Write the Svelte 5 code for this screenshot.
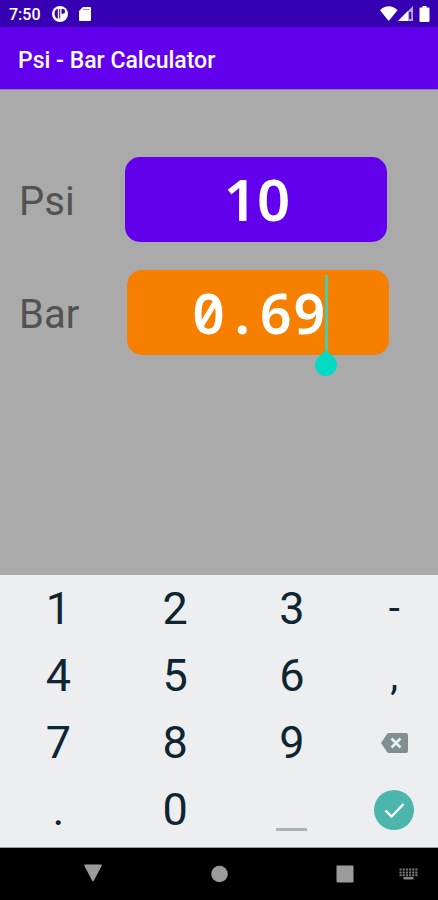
<script lang="ts">
  let psi = $state('10');
  let bar = $state('0.69');

  const keys = ['1', '2', '3', '-', '4', '5', '6', ',', '7', '8', '9', 'delete', '.', '0', 'space', 'done'];

  function update(value: string) {
    bar = value;
    const n = parseFloat(value);
    psi = isNaN(n) ? '' : String(Math.round(n * 14.5038));
  }

  function press(key: string) {
    if (key === 'done') return;
    if (key === 'delete') update(bar.slice(0, -1));
    else if (key === 'space') update(bar + ' ');
    else update(bar + key);
  }
</script>

<div class="screen">
  <div class="status-bar">
    <span class="time">7:50</span>
    <svg class="status-icon" viewBox="0 0 16 16" aria-hidden="true">
      <circle cx="8" cy="8" r="8" fill="#fff" />
      <path d="M5.800 2.500v10.500Q2.500 11 2.500 7.500T5.800 2.500zM7.200 3h1v9.500h-1zM9.500 3h1.200a2.400 2.400 0 0 1 0 4.800H9.500z" fill="#3700b3" />
    </svg>
    <svg class="sd-icon" viewBox="0 0 12 14" aria-hidden="true">
      <path d="M4 0h7a1 1 0 0 1 1 1v12a1 1 0 0 1-1 1H1a1 1 0 0 1-1-1V4z" fill="#fff" />
      <path d="M4.500 2.500h5.500" stroke="#3700b3" stroke-opacity="0.7" stroke-dasharray="1.400 .6" />
    </svg>
    <svg class="signal-icons" viewBox="0 0 50 16" aria-hidden="true">
      <path d="M0 4.200C5-1 12.500-1 17.500 4.200L8.700 15z" fill="#fff" />
      <path d="M33 0v15H18z" fill="#fff" fill-opacity="0.65" />
      <path d="M28 5v10H18z" fill="#fff" />
      <path d="M30.200 6v7" stroke="#3700b3" stroke-width="2" />
      <path d="M42.500 0h4v1.500h2q1 0 1 1V15q0 1-1 1h-8q-1 0-1-1V2.500q0-1 1-1h2z" fill="#fff" />
    </svg>
  </div>

  <header class="app-bar">
    <h1>Psi - Bar Calculator</h1>
  </header>

  <main>
    <div class="row psi">
      <label for="psi">Psi</label>
      <div class="field">
        <input id="psi" type="text" inputmode="none" bind:value={psi} />
      </div>
    </div>
    <div class="row bar">
      <label for="bar">Bar</label>
      <div class="field">
        <input id="bar" type="text" inputmode="none" bind:value={bar} />
        <span class="caret"></span>
        <svg class="handle" viewBox="0 0 22 26" aria-hidden="true">
          <path d="M11 0l7.800 7.200a11 11 0 1 1-15.600 0z" fill="#03dac5" />
        </svg>
      </div>
    </div>
  </main>

  <div class="keypad">
    {#each keys as key}
      <button class="key" class:symbol={key === '-' || key === ','} aria-label={key} onclick={() => press(key)}>
        {#if key === 'delete'}
          <svg class="delete" viewBox="0 0 27 20" aria-hidden="true">
            <path d="M8 0h17q2 0 2 2v16q0 2-2 2H8q-1.200 0-2-1L0 10l6-9q.8-1 2-1z" fill="#809091" />
            <path d="M10.500 5.500l9 9M19.500 5.500l-9 9" stroke="#eceff1" stroke-width="2.500" />
          </svg>
        {:else if key === 'space'}
          <span class="space"></span>
        {:else if key === 'done'}
          <svg class="done" viewBox="0 0 40 40" aria-hidden="true">
            <circle cx="20" cy="20" r="20" fill="#4db6ac" />
            <path d="M11.500 20.500l6 6L29.500 14" fill="none" stroke="#fff" stroke-width="2.400" />
          </svg>
        {:else}
          {key}
        {/if}
      </button>
    {/each}
  </div>

  <nav class="nav-bar">
    <button aria-label="Back">
      <svg viewBox="0 0 20 20" aria-hidden="true">
        <path d="M2 .5h16q1.400 0 .7 1.200l-7.900 15q-.8 1.300-1.600 0l-7.900-15Q.6.5 2 .5z" fill="#9b9b9b" />
      </svg>
    </button>
    <button aria-label="Home">
      <svg viewBox="0 0 20 20" aria-hidden="true">
        <circle cx="10.500" cy="10" r="8.300" fill="#9b9b9b" />
      </svg>
    </button>
    <button aria-label="Recent apps">
      <svg viewBox="0 0 20 20" aria-hidden="true">
        <rect x="1.500" y="1.500" width="17" height="17" rx="1" fill="#9b9b9b" />
      </svg>
    </button>
    <button aria-label="Switch keyboard">
      <svg viewBox="0 0 20 20" aria-hidden="true">
        <path d="M1.500 5.500h18M1.500 8.500h18M1.500 11.200h18" stroke="#777" stroke-width="2" stroke-dasharray="2.200 .96" />
        <path d="M5.500 14.200h10" stroke="#858585" stroke-width="2.500" />
      </svg>
    </button>
  </nav>
</div>

<style>
  :global(body) {
    margin: 0;
  }

  .screen {
    display: flex;
    flex-direction: column;
    min-height: 100vh;
    background: #aaaaaa;
    font-family: Roboto, sans-serif;
  }

  .status-bar {
    display: flex;
    align-items: center;
    height: 27px;
    padding: 1px 8px 0 9px;
    box-sizing: border-box;
    background: #3700b3;
    color: #fff;
  }

  .time {
    font-size: 16px;
    font-weight: 500;
    margin-right: 11px;
  }

  .status-icon {
    width: 16px;
    height: 16px;
    margin-right: 11px;
  }

  .sd-icon {
    width: 12px;
    height: 14px;
  }

  .signal-icons {
    width: 50px;
    height: 16px;
    margin-left: auto;
  }

  .app-bar {
    display: flex;
    align-items: center;
    height: 63px;
    padding: 4px 18px 0;
    box-sizing: border-box;
    background: #6200ee;
    border-bottom: 1px solid #8c7bab;
  }

  h1 {
    margin: 0;
    color: #fff;
    font-size: 23px;
    font-weight: 500;
  }

  main {
    display: flex;
    flex: 1;
    flex-direction: column;
    gap: 28px;
    padding: 67px 0 28px 19px;
  }

  .row {
    display: flex;
    align-items: center;
  }

  .row.psi {
    padding-right: 51px;
  }

  .row.bar {
    padding-right: 49px;
  }

  label {
    width: 106px;
    padding-top: 4px;
    color: #525252;
    font-size: 40px;
  }

  .bar label {
    width: 108px;
  }

  .field {
    position: relative;
    flex: 1;
  }

  input {
    display: block;
    width: 100%;
    height: 85px;
    padding: 0 0 2px 2px;
    box-sizing: border-box;
    border: none;
    border-radius: 15px;
    outline: none;
    background: #6200ee;
    color: #fff;
    caret-color: transparent;
    font-family: 'Noto Sans', sans-serif;
    font-size: 58px;
    font-weight: 600;
    text-align: center;
  }

  .bar input {
    background: #f77f00;
    font-family: 'Noto Sans Mono', monospace;
    font-size: 56px;
  }

  .caret {
    position: absolute;
    top: 5px;
    left: calc(50% + 67px);
    width: 3px;
    height: 76px;
    background: #4fc9a4;
  }

  .handle {
    position: absolute;
    top: 80px;
    left: calc(50% + 57px);
    width: 22px;
    height: 26px;
  }

  .keypad {
    display: grid;
    grid-template-columns: 4fr 4fr 4fr 3fr;
    grid-auto-rows: 67px;
    padding-bottom: 4px;
    background: #eceef0;
    border-bottom: 1px solid #9a9a9a;
  }

  button {
    display: flex;
    align-items: center;
    justify-content: center;
    padding: 0;
    border: none;
    background: none;
    font-family: inherit;
  }

  .key {
    color: #0f2530;
    font-size: 45px;
  }

  .symbol {
    font-size: 40px;
  }

  .delete {
    width: 27px;
    height: 20px;
  }

  .space {
    align-self: flex-end;
    width: 31px;
    height: 3px;
    margin-bottom: 12px;
    background: #a9b3b5;
  }

  .done {
    width: 40px;
    height: 40px;
  }

  .nav-bar {
    display: grid;
    grid-template-columns: 2fr 2fr 1fr 20px;
    justify-items: start;
    height: 52px;
    padding: 0 20px 0 19%;
    background: #000;
  }

  .nav-bar svg {
    width: 20px;
    height: 20px;
  }
</style>
